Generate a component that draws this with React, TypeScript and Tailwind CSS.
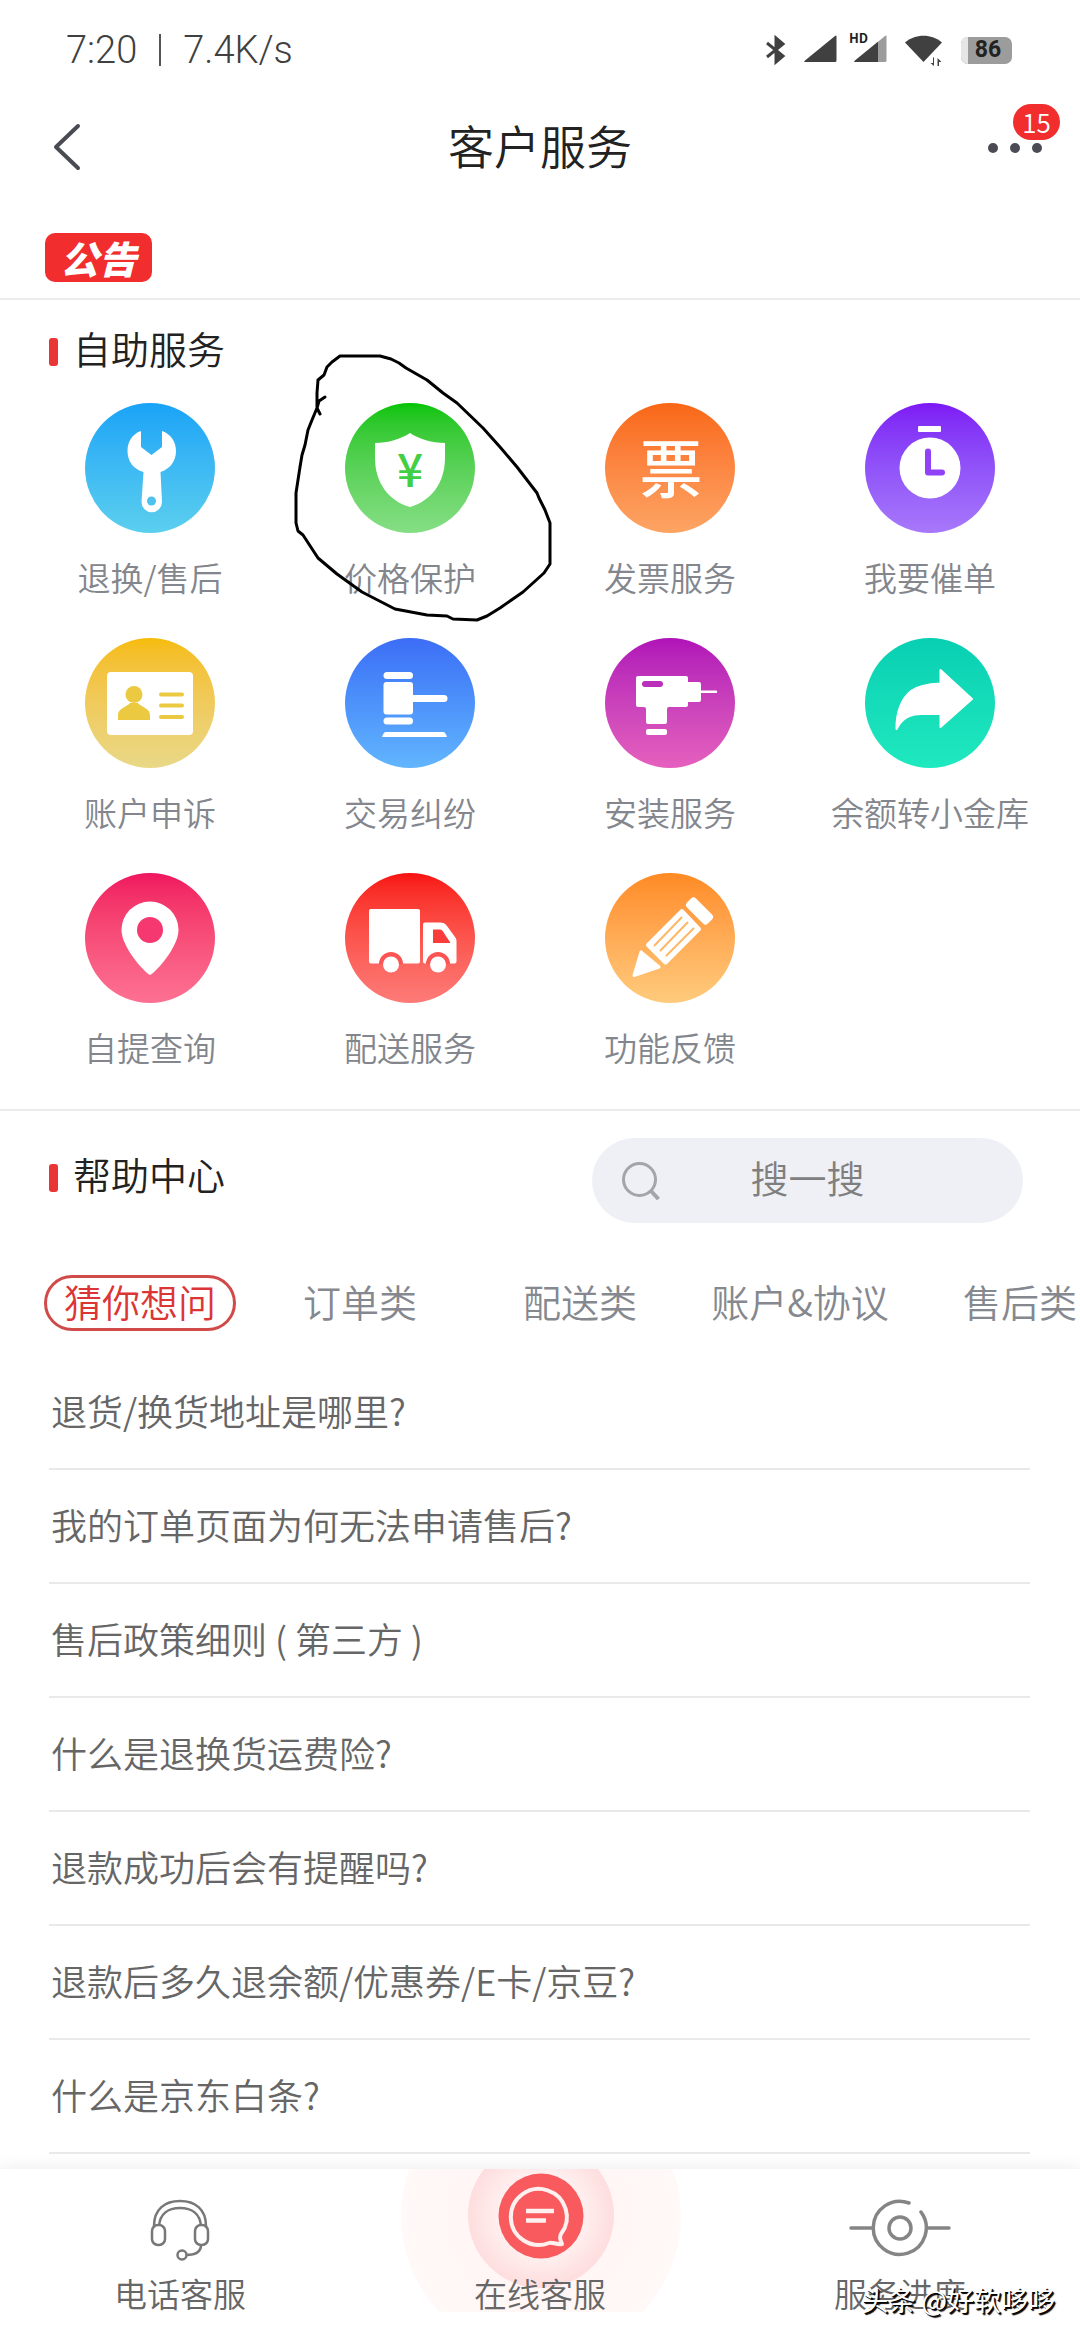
import { useState, type ReactNode } from 'react';

/* ------------------ 类型定义 ------------------ */
interface Service {
  name: string;
  color: string;
  icon: ReactNode;
  marked?: boolean;
}

/* ------------------ 服务图标数据 ------------------ */
const services: Service[] = [
  {
    name: '退换/售后',
    color: 'from-[#18a3f7] to-[#5bcfee]',
    icon: (
      <>
        <path d="M56 28V44L66.500 52L77 44V28C86 31 91 39 91 48C91 58 85 66 75.500 69L77 99A10.200 10.200 0 0 1 56.500 99L58.500 69C48 66 42.500 58 42.500 48C42.500 39 47 31 56 28Z" />
        <circle cx="66.500" cy="98" r="4.500" fill="#4dc2ef" />
      </>
    ),
  },
  {
    name: '价格保护',
    color: 'from-[#00c400] to-[#85de85]',
    marked: true,
    icon: (
      <>
        <path d="M65 30C56 36 43 40 30 40V55C30 80 44 98 65 104C86 98 100 80 100 55V40C87 40 74 36 65 30Z" />
        <text x="65" y="84" textAnchor="middle" fontSize="46" fontWeight="500" fill="#43cf43">
          ¥
        </text>
      </>
    ),
  },
  {
    name: '发票服务',
    color: 'from-[#f96714] to-[#fda463]',
    icon: (
      <text x="66" y="89" textAnchor="middle" fontSize="63" fontWeight="500">
        票
      </text>
    ),
  },
  {
    name: '我要催单',
    color: 'from-[#7d16f5] to-[#a778fb]',
    icon: (
      <>
        <rect x="53" y="23" width="23" height="6" rx="1" />
        <circle cx="65" cy="65" r="30.500" />
        <path d="M63 48.500V69.500H77" fill="none" stroke="#9142f6" strokeWidth="6" strokeLinecap="round" strokeLinejoin="round" />
      </>
    ),
  },
  {
    name: '账户申诉',
    color: 'from-[#f6bc03] to-[#e9d887]',
    icon: (
      <>
        <rect x="22" y="34" width="86" height="63" rx="4" />
        <g fill="#ebc940">
          <circle cx="49" cy="56.500" r="8.500" />
          <path d="M33 82V77C33 70 42 69 45 65H53C56 69 65 70 65 77V82Z" />
          <path d="M76 56.500H97M76 67.500H97M76 79H97" stroke="#ebc940" strokeWidth="4" strokeLinecap="round" />
        </g>
      </>
    ),
  },
  {
    name: '交易纠纷',
    color: 'from-[#3d6df6] to-[#62b5fe]',
    icon: (
      <>
        <rect x="38.500" y="34" width="29.500" height="7" rx="3.500" />
        <rect x="38.500" y="44" width="29.500" height="32.500" rx="3" />
        <rect x="38.500" y="79.500" width="29.500" height="7" rx="3.500" />
        <path d="M67 57H99A3 3 0 0 1 99 64H67Z" />
        <path d="M37 99C38 96 39 94 41 94H98C100 94 101 96 102 99Z" />
      </>
    ),
  },
  {
    name: '安装服务',
    color: 'from-[#b012b8] to-[#e560bd]',
    icon: (
      <>
        <path d="M33 38H81A2 2 0 0 1 83 40V44H94A2 2 0 0 1 96 46V52.500H111A1 1 0 0 1 111 55H96V62A2 2 0 0 1 94 64H83V67A2 2 0 0 1 81 69H64A2 2 0 0 0 62 71V84A2 2 0 0 1 60 86H43A2 2 0 0 1 41 84V71A2 2 0 0 0 39 69H33A2 2 0 0 1 31 67V40A2 2 0 0 1 33 38Z" />
        <rect x="41" y="91" width="21" height="6" rx="2" />
        <rect x="37" y="43" width="21" height="6" rx="3" fill="#bb30ba" />
      </>
    ),
  },
  {
    name: '余额转小金库',
    color: 'from-[#07cfb2] to-[#1fe9bf]',
    icon: (
      <path
        d="M75.500 32L107 61L75.500 89V76H60C45 75 37 80 31.500 91C31 74 37 60 46 53C54 47 65 46 75.500 45.500Z"
        stroke="#fff"
        strokeWidth="2"
        strokeLinejoin="round"
      />
    ),
  },
  {
    name: '自提查询',
    color: 'from-[#f0155f] to-[#fd7193]',
    icon: (
      <>
        <path d="M65 102C59 99 36.500 74 36.500 57A28.500 28.500 0 0 1 93.500 57C93.500 74 71 99 65 102Z" />
        <circle cx="65" cy="57" r="13" fill="#f5386f" />
      </>
    ),
  },
  {
    name: '配送服务',
    color: 'from-[#f81010] to-[#fd7b78]',
    icon: (
      <>
        <rect x="24" y="36" width="51" height="54.500" rx="2" />
        <path d="M80 49.500H95C98 49.500 100 50 102 53L110 64C111.500 66 111.500 67 111.500 69V88.500A2 2 0 0 1 109.500 90.500H80A2 2 0 0 1 78 88.500V51.500A2 2 0 0 1 80 49.500Z" />
        <path d="M88 56.500H94C96 56.500 97 57 98 58.500L105.500 70H88Z" fill="#fa3c3a" />
        <path d="M34 91A12 12 0 0 1 58 91ZM81 91A12 12 0 0 1 105 91Z" fill="#fb5654" />
        <circle cx="46" cy="91.500" r="8" />
        <circle cx="93" cy="91.500" r="8" />
      </>
    ),
  },
  {
    name: '功能反馈',
    color: 'from-[#fe8a22] to-[#fecb7c]',
    icon: (
      <>
        <g stroke="#fff" strokeLinejoin="round">
          <path d="M88.500 28L104.500 44L100.500 48L84.500 32Z" strokeWidth="7" />
          <path d="M77 38L94 56L60.500 89.500L43 72Z" strokeWidth="4" />
          <path d="M36 79L54 94L29 102.500Z" strokeWidth="3" />
        </g>
        <path d="M77 44L49 73M83 49L55 78M89 55L61 83" stroke="#fdb765" strokeWidth="2" />
      </>
    ),
  },
];

const tabs = ['猜你想问', '订单类', '配送类', '账户&协议', '售后类'];

const questions = [
  '退货/换货地址是哪里?',
  '我的订单页面为何无法申请售后?',
  '售后政策细则 ( 第三方 )',
  '什么是退换货运费险?',
  '退款成功后会有提醒吗?',
  '退款后多久退余额/优惠券/E卡/京豆?',
  '什么是京东白条?',
];

/* ------------------ 状态栏 ------------------ */
function StatusBar() {
  return (
    <div className="flex h-[98px] items-center justify-between pt-[2px] pr-[68px] pl-[66px] text-[#404040]">
      <span className="flex items-center gap-[22px] font-['Roboto',sans-serif] text-[38px] leading-[48px]">
        <span>7:20</span>
        <span className="h-8 w-[2px] bg-[#555555]"></span>
        <span>7.4K/s</span>
      </span>
      <div className="flex items-center gap-[17px]">
        <svg className="h-8 w-[22px]" viewBox="0 0 22 32" fill="none" stroke="currentColor" strokeWidth="3">
          <path d="M2 9L18 22L11 28V4L18 10L2 23" />
          <path d="M11 4L18 10L11 16L18 22L11 28Z" fill="currentColor" stroke="none" />
        </svg>
        <svg className="h-8 w-[33px]" viewBox="0 0 33 32" fill="currentColor">
          <path d="M32.500 2V26.500A1.500 1.500 0 0 1 31 28H1Q-0.500 28 1 26.500L31 2Q32.500 1 32.500 2Z" />
        </svg>
        <div className="relative">
          <svg className="h-8 w-[33px]" viewBox="0 0 33 32" fill="currentColor">
            <path d="M32.500 2V26.500A1.500 1.500 0 0 1 31 28H1Q-0.500 28 1 26.500L31 2Q32.500 1 32.500 2Z" fill="#9c9c9c" />
            <path d="M24 7.700V28H1Q-0.500 28 1 26.500Z" />
          </svg>
          <span className="absolute -top-[3px] -left-[5px] text-[13px] leading-[14px] font-bold text-[#222222]">HD</span>
        </div>
        <svg className="h-8 w-10" viewBox="0 0 40 32" fill="currentColor">
          <path d="M1 8.500C11 -0.500 28 -0.500 38 8.500L19.500 28Z" />
          <path d="M30 23.500V32L26.500 29H29V23.500ZM33.500 32V24L37.500 28H35V32Z" />
        </svg>
        <span className="flex h-[27px] w-[51px] items-center rounded-[7px] bg-[#9c9c9c]">
          <span className="h-full w-[7px] rounded-l-[7px] bg-[#e6e6e6]"></span>
          <span className="flex-1 pr-1 text-center font-['Roboto',sans-serif] text-[23px] leading-[26px] font-bold text-[#222222]">86</span>
        </span>
      </div>
    </div>
  );
}

/* ------------------ 顶部标题 ------------------ */
function Header() {
  return (
    <header className="grid h-[100px] grid-cols-3 items-center px-[50px]">
      <button type="button" aria-label="返回" className="justify-self-start">
        <svg className="h-[50px] w-8" viewBox="0 0 32 50" fill="none" stroke="#494b52" strokeWidth="4" strokeLinecap="round" strokeLinejoin="round">
          <path d="M28 3L6 24L28 45" />
        </svg>
      </button>
      <h1 className="pb-2 text-center text-[46px] leading-[60px] whitespace-nowrap text-[#222222]">客户服务</h1>
      <button type="button" aria-label="更多" className="relative -mr-3 flex gap-3 justify-self-end">
        <span className="size-[10px] rounded-full bg-[#4a4b54]"></span>
        <span className="size-[10px] rounded-full bg-[#4a4b54]"></span>
        <span className="size-[10px] rounded-full bg-[#4a4b54]"></span>
        <span className="absolute -top-[39px] -right-[18px] flex h-9 w-[47px] items-center justify-center rounded-full bg-[#f12d2d] text-[26px] leading-9 text-white">
          15
        </span>
      </button>
    </header>
  );
}

function SectionTitle({ children }: { children: ReactNode }) {
  return (
    <h2 className="flex items-center gap-[15px] text-[38px] leading-[48px] text-[#222222]">
      <span className="h-7 w-[9px] rounded-[3px] bg-[#e93535]"></span>
      <span className="pb-2">{children}</span>
    </h2>
  );
}

/* ------------------ 手绘圈注 ------------------ */
function PenMark() {
  return (
    <svg
      className="pointer-events-none absolute -top-[53px] left-[10px] h-[276px] w-[266px]"
      viewBox="290 350 266 276"
      fill="none"
      stroke="#000"
      strokeWidth="3"
      strokeLinecap="round"
      strokeLinejoin="round"
    >
      <path d="M325 397L319 401L317 408L320 414M318 380L324 375L327 367L332 362L340 356H380L391 359L399 363L406 368L427 380L443 393L457 403L483 428L500 447L517 467L537 493L539 498L545 510L550 523V564L544 573L523 592L500 608L487 616L477 620L453 619L447 616L427 615L395 609L362 592L337 574L318 558L303 535L298 531L296 523V493L300 467L302 455L305 445L308 430L312 420L317 408V393L318 380" />
    </svg>
  );
}

/* ------------------ 自助服务 ------------------ */
function SelfService() {
  return (
    <section className="border-b-2 border-[#ebebeb] pt-6 pb-[42px]">
      <div className="px-[49px]">
        <SectionTitle>自助服务</SectionTitle>
      </div>
      <ul className="mt-[23px] grid grid-cols-4 gap-y-[41px] px-5">
        {services.map((service) => (
          <li key={service.name} className="relative">
            <a href="#" className="flex flex-col items-center gap-6">
              <span className={`size-[130px] rounded-full bg-linear-to-b ${service.color}`}>
                <svg className="size-full" viewBox="0 0 130 130" fill="#fff">
                  {service.icon}
                </svg>
              </span>
              <span className="text-[33px] leading-10 whitespace-nowrap text-[#83868c]">{service.name}</span>
            </a>
            {service.marked && <PenMark />}
          </li>
        ))}
      </ul>
    </section>
  );
}

/* ------------------ 帮助中心 ------------------ */
function HelpCenter() {
  const [activeTab, setActiveTab] = useState(tabs[0]);

  return (
    <section className="pt-[27px]">
      <div className="flex items-start justify-between pr-[57px] pl-[49px]">
        <div className="pt-3">
          <SectionTitle>帮助中心</SectionTitle>
        </div>
        <label className="flex h-[85px] w-[431px] items-center rounded-full bg-[#eff0f5] px-[30px]">
          <svg className="size-[38px] shrink-0" viewBox="0 0 38 38" fill="none" stroke="#a2a5a9" strokeWidth="3">
            <circle cx="17.500" cy="17.500" r="16" />
            <path d="M28.500 28.500L36.500 37" strokeWidth="4" />
          </svg>
          <input
            type="text"
            aria-label="搜索"
            placeholder="搜一搜"
            className="min-w-0 flex-1 bg-transparent pr-[38px] pb-2 text-center text-[38px] leading-[48px] outline-none placeholder:text-[#7f7f7f]"
          />
        </label>
      </div>

      <div role="tablist" className="mt-10 flex overflow-hidden py-3 pl-[30px]">
        {tabs.map((tab) => (
          <div key={tab} className="flex w-[220px] shrink-0 justify-center">
            <button
              type="button"
              role="tab"
              aria-selected={tab === activeTab}
              onClick={() => setActiveTab(tab)}
              className={`h-14 rounded-full border-[3px] px-[17px] pb-1 text-[38px] leading-[46px] whitespace-nowrap ${
                tab === activeTab ? 'border-[#d14a4a] text-[#dc3535]' : 'border-transparent text-[#85888e]'
              }`}
            >
              {tab}
            </button>
          </div>
        ))}
      </div>

      <ul className="mt-[13px] mr-[50px] ml-[49px]">
        {questions.map((question) => (
          <li key={question} className="border-b-2 border-[#e9e9e9]">
            <a href="#" className="block px-[2px] pt-[30px] pb-[34px] text-[36px] leading-[48px] text-[#666666]">
              {question}
            </a>
          </li>
        ))}
      </ul>
    </section>
  );
}

/* ------------------ 底部导航 ------------------ */
function BottomNav() {
  return (
    <nav className="relative mt-auto grid h-[171px] grid-cols-3 bg-white text-[33px] leading-10 text-[#666666] shadow-[0_-4px_14px_rgba(0,0,0,0.06)]">
      <a href="#" className="flex flex-col items-center justify-end gap-3 pb-[27px]">
        <svg className="h-[62px] w-[60px]" viewBox="0 0 60 62" fill="none" stroke="#777" strokeWidth="2.500">
          <path d="M4 27C4 10 15 2 30 2C45 2 56 10 56 27M9 27C10 15 18 9 30 9C42 9 50 15 51 27" />
          <rect x="2" y="26" width="13" height="20" rx="6" />
          <rect x="45" y="26" width="13" height="20" rx="6" />
          <path d="M51 46C51 53 46 56 36 56" />
          <circle cx="32" cy="56" r="4.500" />
        </svg>
        电话客服
      </a>
      <a href="#" className="relative flex flex-col items-center justify-end pb-[27px]">
        <svg className="absolute top-0 h-[143px] w-[282px]" viewBox="0 0 282 143" fill="none">
          <defs>
            <radialGradient id="outer">
              <stop offset="0.500" stopColor="#fff6f5" />
              <stop offset="1" stopColor="#fff9f8" />
            </radialGradient>
            <radialGradient id="inner">
              <stop offset="0.550" stopColor="#fff0f0" />
              <stop offset="1" stopColor="#fedddd" />
            </radialGradient>
          </defs>
          <circle cx="142" cy="47" r="140" fill="url(#outer)" />
          <circle cx="142" cy="46" r="73" fill="url(#inner)" />
          <circle cx="142" cy="47" r="42.500" fill="#f85a5e" />
          <path
            d="M162 65A28 28 0 1 0 150 74C153 72.500 157 76 163 75C161 71 160 68 162 65Z"
            stroke="#fff0f0"
            strokeWidth="4"
            strokeLinejoin="round"
          />
          <path d="M127 42H155M127 51.500H147" stroke="#fff0f0" strokeWidth="4.500" />
        </svg>
        <span className="relative">在线客服</span>
      </a>
      <a href="#" className="flex flex-col items-center justify-end gap-4 pb-[27px]">
        <svg className="h-[58px] w-[102px]" viewBox="0 0 102 58" fill="none" stroke="#858585" strokeWidth="3.500" strokeLinecap="round">
          <path d="M60 4A26.500 26.500 0 1 0 72 13M2 29H24M78 29H100" />
          <circle cx="51" cy="29" r="11" />
        </svg>
        服务进度
      </a>
      <p className="absolute right-[25px] bottom-6 text-[27px] leading-8 font-normal whitespace-nowrap text-white [text-shadow:2px_2px_1px_#000,1px_1px_0_#000]">
        头条 @好软哆哆
      </p>
    </nav>
  );
}

/* ------------------ 页面组件 ------------------ */
export default function App() {
  return (
    <div className="flex min-h-screen flex-col overflow-hidden bg-white font-['Noto_Sans_CJK_SC',sans-serif] font-[350]">
      <StatusBar />
      <Header />
      <div className="border-b-2 border-[#ececec] px-[45px] pt-[35px] pb-4">
        <span className="flex h-[49px] w-[107px] items-center justify-center rounded-[10px] bg-[#f12d2d] text-[38px] leading-[48px] font-black text-white italic">
          公告
        </span>
      </div>
      <SelfService />
      <HelpCenter />
      <BottomNav />
    </div>
  );
}
